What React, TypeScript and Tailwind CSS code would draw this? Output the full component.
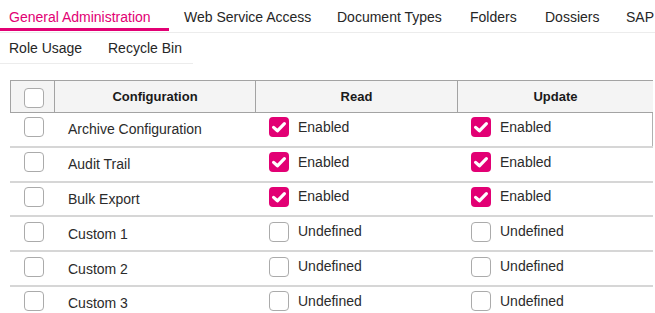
import React from 'react'

const topTabs = [
  { label: 'General Administration', w: 'w-[175px]' },
  { label: 'Web Service Access', w: 'w-[153px]' },
  { label: 'Document Types', w: 'w-[133px]' },
  { label: 'Folders', w: 'w-[75px]' },
  { label: 'Dossiers', w: 'w-[81px]' },
  { label: 'SAP', w: 'w-[56px]' },
]
const subTabs = [
  { label: 'Role Usage', w: 'w-[99px]' },
  { label: 'Recycle Bin', w: 'w-[100px]' },
]

interface Row {
  name: string
  read: boolean
  update: boolean
}

const rows: Row[] = [
  { name: 'Archive Configuration', read: true, update: true },
  { name: 'Audit Trail', read: true, update: true },
  { name: 'Bulk Export', read: true, update: true },
  { name: 'Custom 1', read: false, update: false },
  { name: 'Custom 2', read: false, update: false },
  { name: 'Custom 3', read: false, update: false },
]

function Checkbox({ checked = false }: { checked?: boolean }) {
  if (checked) {
    return (
      <span className="flex h-[20px] w-[20px] shrink-0 items-center justify-center rounded-[4px] bg-[#e20074]">
        <svg width="20" height="20" viewBox="0 0 20 20" fill="none">
          <path d="M4.6 10.4 8.4 13.8 15.4 6.6" stroke="#fff" strokeWidth={3.2} strokeLinecap="round" strokeLinejoin="round" />
        </svg>
      </span>
    )
  }
  return <span className="block h-[20px] w-[20px] shrink-0 rounded-[4px] border border-[#ababab] bg-white" />
}

function Permission({ on }: { on: boolean }) {
  return (
    <div className="flex items-center gap-[9px] pb-[4px]">
      <Checkbox checked={on} />
      <span>{on ? 'Enabled' : 'Undefined'}</span>
    </div>
  )
}

export default function App() {
  return (
    <div className="h-[313px] w-[655px] overflow-hidden bg-white font-['Liberation_Sans',Arial,sans-serif] text-[14px] text-[#2b2b2b]">
      {/* tabs */}
      <div className="-ml-[6px] flex w-[700px]">
        {topTabs.map((t, i) => (
          <div
            key={t.label}
            className={`relative h-[33px] shrink-0 whitespace-nowrap border-b border-[#ececec] pl-[15px] pt-[7px] leading-[20px] ${t.w} ${
              i === 0 ? 'text-[#e20074]' : 'text-[#262626]'
            }`}
          >
            {t.label}
            {i === 0 && <span className="absolute bottom-[1px] left-0 right-0 h-[3px] bg-[#e20074]" />}
          </div>
        ))}
        <div className="h-[33px] flex-1 border-b border-[#ececec]" />
      </div>
      <div className="-ml-[6px] flex">
        {subTabs.map((t) => (
          <div key={t.label} className={`h-[31px] shrink-0 whitespace-nowrap border-b border-[#ececec] pl-[15px] pt-[5px] leading-[20px] text-[#262626] ${t.w}`}>
            {t.label}
          </div>
        ))}
      </div>

      {/* table */}
      <div className="ml-[10px] mt-[16px] w-[643px]">
        <div className="flex h-[33px] border-y border-[#a3a3a3] bg-[#f4f4f4] text-[13px] font-bold text-[#1a1a1a]">
          <div className="flex w-[45px] items-center border-x border-[#a3a3a3] pl-[13px] pt-[3px]">
            <Checkbox />
          </div>
          <div className="flex w-[201px] items-center justify-center border-r border-[#a3a3a3]">Configuration</div>
          <div className="flex w-[202px] items-center justify-center border-r border-[#a3a3a3]">Read</div>
          <div className="flex flex-1 items-center justify-center">Update</div>
        </div>
        {rows.map((r, i) => (
          <div key={r.name} className="flex h-[34.8px] border-b-2 border-[#d6d6d6]">
            <div className="flex w-[45px] items-center pb-[4px] pl-[14px]">
              <Checkbox />
            </div>
            <div className="flex w-[201px] items-center pl-[13px] pt-[1px]">{r.name}</div>
            <div className="flex w-[202px] items-center pl-[13px]">
              <Permission on={r.read} />
            </div>
            <div className={`flex flex-1 items-center pl-[13px] ${i === 0 ? 'border-r border-[#b0b0b0]' : ''}`}>
              <Permission on={r.update} />
            </div>
          </div>
        ))}
      </div>
    </div>
  )
}
